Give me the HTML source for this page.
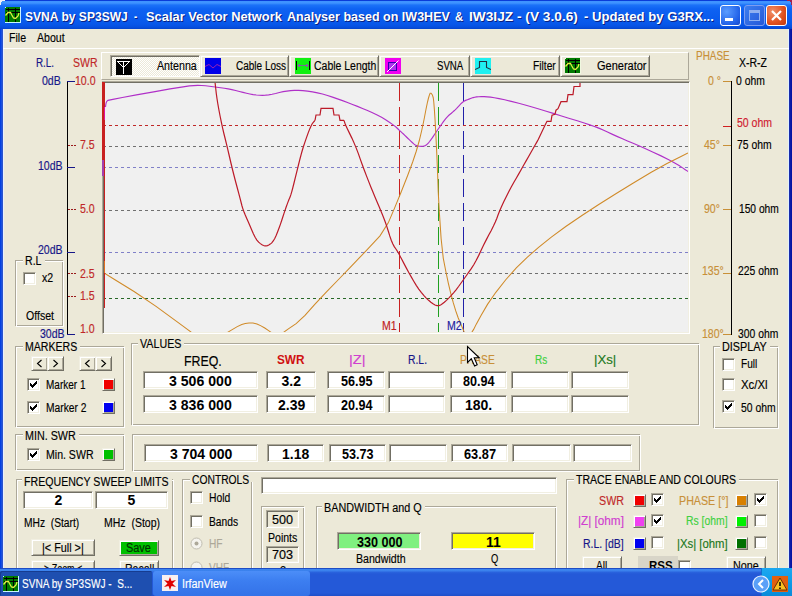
<!DOCTYPE html><html><head><meta charset="utf-8"><style>
html,body{margin:0;padding:0;width:792px;height:596px;overflow:hidden;background:#ECE9D8;position:relative;font-family:"Liberation Sans",sans-serif}
div,span,svg{position:absolute;box-sizing:border-box}span{white-space:pre;-webkit-text-stroke:0.15px currentColor}
</style></head><body>
<div style="left:0px;top:0px;width:792px;height:596px;background:#0A55E0"></div>
<div style="left:0px;top:0px;width:792px;height:29px;background:linear-gradient(#0A3CD8 0px,#0A3CD8 1px,#3E92FF 1px,#4094FF 3px,#1C72F8 5px,#0E62F2 9px,#0A5CEE 18px,#0858EA 24px,#0650E0 27px,#0444CC 29px)"></div>
<svg style="left:0;top:0" width="5" height="5"><path d="M0 0H5V1H2V2H1V5H0Z" fill="#F0F0F8"/></svg>
<svg style="left:787px;top:0" width="5" height="5"><path d="M0 0H5V5H4V2H3V1H0Z" fill="#A02050"/></svg>
<div style="left:0px;top:29px;width:3px;height:539px;background:linear-gradient(90deg,#0038D8 0,#0848E8 1px,#2858D8 2px,#3050C0 3px)"></div>
<div style="left:789px;top:29px;width:3px;height:539px;background:linear-gradient(90deg,#2038B0 0,#1020A8 1px,#0010A0 3px)"></div>
<div style="left:3px;top:29px;width:786px;height:539px;background:#ECE9D8"></div>
<div style="left:3px;top:29px;width:1px;height:539px;background:#E8F0FF"></div>
<div style="left:788px;top:29px;width:1px;height:539px;background:#E0F0FF"></div>
<svg style="left:5px;top:7px" width="16" height="16"><rect x="0" y="0" width="16" height="16" fill="#C8F4FF"/><rect x="1" y="1" width="14" height="14" fill="#007A00"/><rect x="0" y="1" width="1" height="14" fill="#007A00"/><rect x="1" y="0" width="14" height="1" fill="#007A00"/><path d="M1 2.5h14M1 5.5h14M3.5 1v14M10.5 1v14" stroke="#000" stroke-width="1"/><polyline points="0.5,8.5 3,5.5 5.5,5.5 6.5,7.5 8.5,11 10.5,11.5 13,9 14,6" fill="none" stroke="#E0F040" stroke-width="1.3"/></svg>
<span style="left:26.0px;top:11px;font-size:13px;line-height:13px;font-weight:bold;-webkit-text-stroke:0;color:#0A2080;transform:scaleX(0.9279);transform-origin:0px 0;">SVNA by SP3SWJ</span>
<span style="left:135.0px;top:11px;font-size:13px;line-height:13px;font-weight:bold;-webkit-text-stroke:0;color:#0A2080;transform:scaleX(0.7500);transform-origin:0px 0;">-</span>
<span style="left:147.0px;top:11px;font-size:13px;line-height:13px;font-weight:bold;-webkit-text-stroke:0;color:#0A2080;transform:scaleX(0.9899);transform-origin:0px 0;">Scalar Vector Network</span>
<span style="left:288.0px;top:11px;font-size:13px;line-height:13px;font-weight:bold;-webkit-text-stroke:0;color:#0A2080;transform:scaleX(0.9633);transform-origin:0px 0;">Analyser based on IW3HEV</span>
<span style="left:456.2px;top:11px;font-size:13px;line-height:13px;font-weight:bold;-webkit-text-stroke:0;color:#0A2080;transform:scaleX(0.8667);transform-origin:0px 0;">&amp;</span>
<span style="left:470.3px;top:11px;font-size:13px;line-height:13px;font-weight:bold;-webkit-text-stroke:0;color:#0A2080;transform:scaleX(1.0544);transform-origin:0px 0;">IW3IJZ - (V 3.0.6)</span>
<span style="left:585.0px;top:11px;font-size:13px;line-height:13px;font-weight:bold;-webkit-text-stroke:0;color:#0A2080;transform:scaleX(1.0101);transform-origin:0px 0;">- Updated by G3RX...</span>
<span style="left:25.0px;top:10px;font-size:13px;line-height:13px;font-weight:bold;-webkit-text-stroke:0;color:#fff;transform:scaleX(0.9279);transform-origin:0px 0;">SVNA by SP3SWJ</span>
<span style="left:134.0px;top:10px;font-size:13px;line-height:13px;font-weight:bold;-webkit-text-stroke:0;color:#fff;transform:scaleX(0.7500);transform-origin:0px 0;">-</span>
<span style="left:146.0px;top:10px;font-size:13px;line-height:13px;font-weight:bold;-webkit-text-stroke:0;color:#fff;transform:scaleX(0.9899);transform-origin:0px 0;">Scalar Vector Network</span>
<span style="left:287.0px;top:10px;font-size:13px;line-height:13px;font-weight:bold;-webkit-text-stroke:0;color:#fff;transform:scaleX(0.9633);transform-origin:0px 0;">Analyser based on IW3HEV</span>
<span style="left:455.2px;top:10px;font-size:13px;line-height:13px;font-weight:bold;-webkit-text-stroke:0;color:#fff;transform:scaleX(0.8667);transform-origin:0px 0;">&amp;</span>
<span style="left:469.3px;top:10px;font-size:13px;line-height:13px;font-weight:bold;-webkit-text-stroke:0;color:#fff;transform:scaleX(1.0544);transform-origin:0px 0;">IW3IJZ - (V 3.0.6)</span>
<span style="left:584.0px;top:10px;font-size:13px;line-height:13px;font-weight:bold;-webkit-text-stroke:0;color:#fff;transform:scaleX(1.0101);transform-origin:0px 0;">- Updated by G3RX...</span>
<div style="left:720px;top:5px;width:21px;height:21px;border:1px solid #fff;border-radius:3px;background:radial-gradient(circle at 30% 30%,#5A9CFF,#2060E8 70%,#1848C8)"><div style="left:4px;top:12px;width:8px;height:3px;background:#fff"></div></div>
<div style="left:744px;top:5px;width:21px;height:21px;border:1px solid #7C9CF0;border-radius:3px;background:linear-gradient(135deg,#3C7EF0,#2458D8)"><div style="left:4px;top:4px;width:11px;height:11px;border:1px solid #8FB0F0;border-top-width:3px"></div></div>
<div style="left:766px;top:5px;width:21px;height:21px;border:1px solid #fff;border-radius:3px;background:radial-gradient(circle at 30% 30%,#F0906A,#E0501E 60%,#C03A10)"><svg width="19" height="19" style="left:0;top:0"><path d="M5 5L14 14M14 5L5 14" stroke="#fff" stroke-width="2.2"/></svg></div>
<span style="left:9.0px;top:32px;font-size:12px;line-height:12px;color:#000;transform:scaleX(0.8800);transform-origin:0px 0;">File</span>
<span style="left:37.0px;top:32px;font-size:12px;line-height:12px;color:#000;transform:scaleX(0.8800);transform-origin:0px 0;">About</span>
<div style="left:3px;top:48px;width:786px;height:1px;background:#fff"></div>
<span style="left:36.0px;top:57px;font-size:12px;line-height:12px;color:#161688;transform:scaleX(0.8182);transform-origin:0px 0;">R.L.</span>
<span style="left:73.0px;top:57px;font-size:12px;line-height:12px;color:#C02828;transform:scaleX(0.8750);transform-origin:0px 0;">SWR</span>
<div style="left:67px;top:81px;width:1px;height:254px;background:#000"></div>
<div style="left:67px;top:81px;width:8px;height:1px;background:#161688"></div>
<div style="left:67px;top:167px;width:8px;height:1px;background:#161688"></div>
<div style="left:67px;top:252px;width:8px;height:1px;background:#161688"></div>
<div style="left:67px;top:334px;width:8px;height:1px;background:#161688"></div>
<div style="left:68px;top:145px;width:8px;height:1px;background:repeating-linear-gradient(90deg,#9A1C1C 0 2px,transparent 2px 3px)"></div>
<div style="left:68px;top:209px;width:8px;height:1px;background:repeating-linear-gradient(90deg,#9A1C1C 0 2px,transparent 2px 3px)"></div>
<div style="left:68px;top:273px;width:8px;height:1px;background:repeating-linear-gradient(90deg,#9A1C1C 0 2px,transparent 2px 3px)"></div>
<div style="left:68px;top:296px;width:8px;height:1px;background:repeating-linear-gradient(90deg,#9A1C1C 0 2px,transparent 2px 3px)"></div>
<span style="left:42.0px;top:75px;font-size:12px;line-height:12px;color:#161688;transform:scaleX(0.8800);transform-origin:0px 0;">0dB</span>
<span style="left:38.0px;top:160px;font-size:12px;line-height:12px;color:#161688;transform:scaleX(0.8800);transform-origin:0px 0;">10dB</span>
<span style="left:38.0px;top:244px;font-size:12px;line-height:12px;color:#161688;transform:scaleX(0.8800);transform-origin:0px 0;">20dB</span>
<span style="left:40.0px;top:328px;font-size:12px;line-height:12px;color:#161688;transform:scaleX(0.8800);transform-origin:0px 0;">30dB</span>
<span style="left:75.0px;top:75px;font-size:12px;line-height:12px;color:#C02828;transform:scaleX(0.8800);transform-origin:0px 0;">10.0</span>
<span style="left:80.0px;top:139px;font-size:12px;line-height:12px;color:#C02828;transform:scaleX(0.8800);transform-origin:0px 0;">7.5</span>
<span style="left:80.0px;top:203px;font-size:12px;line-height:12px;color:#C02828;transform:scaleX(0.8800);transform-origin:0px 0;">5.0</span>
<span style="left:80.0px;top:268px;font-size:12px;line-height:12px;color:#C02828;transform:scaleX(0.8800);transform-origin:0px 0;">2.5</span>
<span style="left:80.0px;top:290px;font-size:12px;line-height:12px;color:#C02828;transform:scaleX(0.8800);transform-origin:0px 0;">1.5</span>
<span style="left:80.0px;top:323px;font-size:12px;line-height:12px;color:#C02828;transform:scaleX(0.8800);transform-origin:0px 0;">1.0</span>
<div style="left:15px;top:260px;width:48px;height:66px;border:1px solid #ACA899"></div>
<div style="left:16px;top:261px;width:48px;height:66px;border:1px solid #FFFFFF"></div>
<div style="left:23px;top:259px;width:21.72px;height:4px;background:#ECE9D8"></div>
<span style="left:25.0px;top:255px;font-size:12px;line-height:12px;color:#000;transform:scaleX(0.8800);transform-origin:0px 0;">R.L</span>
<div style="left:23px;top:272px;width:13px;height:13px;background:#fff;border:1px solid;border-color:#ACA899 #FFFFFF #FFFFFF #ACA899;box-shadow:inset 1px 1px #716F64,inset -1px -1px #F1EFE2"></div>
<span style="left:42.0px;top:272px;font-size:12px;line-height:12px;color:#000;transform:scaleX(0.8800);transform-origin:0px 0;">x2</span>
<span style="left:26.0px;top:310px;font-size:12px;line-height:12px;color:#000;transform:scaleX(0.8800);transform-origin:0px 0;">Offset</span>
<div style="left:101px;top:52px;width:588px;height:28px;border:1px solid;border-color:#FFFFFF #ACA899 #ACA899 #FFFFFF"></div>
<div style="left:110px;top:55px;width:90px;height:22px;background:repeating-conic-gradient(#fff 0 25%,#ECE9D8 0 50%) 0 0/2px 2px;border:1px solid;border-color:#ACA899 #FFFFFF #FFFFFF #ACA899;box-shadow:inset 1px 1px #716F64"></div>
<svg style="left:116px;top:59px" width="16" height="16" shape-rendering="crispEdges"><rect width="16" height="16" fill="#000"/><path d="M1 2h13v1H1zM7 2h1v13H7zM1 2h1v1h-1zM13 2h1v1h-1zM2 3h1v1h-1zM12 3h1v1h-1zM3 4h1v1h-1zM11 4h1v1h-1zM4 5h1v1h-1zM10 5h1v1h-1zM5 6h1v1h-1zM9 6h1v1h-1zM6 7h1v1h-1zM8 7h1v1h-1zM7 8h1v1h-1zM7 8h1v1h-1z" fill="#fff"/></svg>
<span style="left:157.0px;top:60px;font-size:12px;line-height:12px;color:#000;transform:scaleX(0.8889);transform-origin:0px 0;">Antenna</span>
<div style="left:200px;top:55px;width:89px;height:22px;background:#ECE9D8;border:1px solid;border-color:#F1EFE2 #716F64 #716F64 #F1EFE2;box-shadow:inset 1px 1px #FFFFFF,inset -1px -1px #ACA899;"></div>
<svg style="left:205px;top:58px" width="16" height="16"><rect width="16" height="16" fill="#0000E8"/><polyline points="0,8.5 4,6.5 8,10 12,6.5 16,8.5" fill="none" stroke="#9A20B0" stroke-width="1"/></svg>
<span style="left:236.0px;top:60px;font-size:12px;line-height:12px;color:#000;transform:scaleX(0.8333);transform-origin:0px 0;">Cable Loss</span>
<div style="left:289px;top:55px;width:90px;height:22px;background:#ECE9D8;border:1px solid;border-color:#F1EFE2 #716F64 #716F64 #F1EFE2;box-shadow:inset 1px 1px #FFFFFF,inset -1px -1px #ACA899;"></div>
<svg style="left:295px;top:58px" width="16" height="16"><rect width="16" height="16" fill="#10F010"/><path d="M1.5 3v9M14.5 3v9" stroke="#000" stroke-width="1"/><path d="M3 7.5h10" stroke="#707090" stroke-width="1"/><circle cx="4" cy="7.5" r="1.3" fill="#A040C0"/><circle cx="12" cy="7.5" r="1.3" fill="#A040C0"/></svg>
<span style="left:314.0px;top:60px;font-size:12px;line-height:12px;color:#000;transform:scaleX(0.8732);transform-origin:0px 0;">Cable Length</span>
<div style="left:379px;top:55px;width:91px;height:22px;background:#ECE9D8;border:1px solid;border-color:#F1EFE2 #716F64 #716F64 #F1EFE2;box-shadow:inset 1px 1px #FFFFFF,inset -1px -1px #ACA899;"></div>
<svg style="left:385px;top:58px" width="16" height="16"><rect width="16" height="16" fill="#F000F0"/><rect x="3.5" y="4.5" width="8" height="8" fill="#B030F0" stroke="#3000B0"/><path d="M2 14L13.5 2.5" stroke="#fff" stroke-width="1"/></svg>
<span style="left:437.0px;top:60px;font-size:12px;line-height:12px;color:#000;transform:scaleX(0.8030);transform-origin:0px 0;">SVNA</span>
<div style="left:470px;top:55px;width:90px;height:22px;background:#ECE9D8;border:1px solid;border-color:#F1EFE2 #716F64 #716F64 #F1EFE2;box-shadow:inset 1px 1px #FFFFFF,inset -1px -1px #ACA899;"></div>
<svg style="left:475px;top:58px" width="16" height="16"><rect width="16" height="16" fill="#20F0F0"/><polyline points="0,11.5 4.5,9.5 4.5,3.5 11.5,3.5 11.5,9.5 16,11.5" fill="none" stroke="#203040" stroke-width="1.1"/></svg>
<span style="left:533.0px;top:60px;font-size:12px;line-height:12px;color:#000;transform:scaleX(0.8519);transform-origin:0px 0;">Filter</span>
<div style="left:560px;top:55px;width:90px;height:22px;background:#ECE9D8;border:1px solid;border-color:#F1EFE2 #716F64 #716F64 #F1EFE2;box-shadow:inset 1px 1px #FFFFFF,inset -1px -1px #ACA899;"></div>
<svg style="left:565px;top:58px" width="16" height="16"><rect x="0" y="0" width="16" height="16" fill="#F0F8E0"/><rect x="1" y="1" width="14" height="14" fill="#007A00"/><rect x="0" y="1" width="1" height="14" fill="#007A00"/><rect x="1" y="0" width="14" height="1" fill="#007A00"/><path d="M1 2.5h14M1 5.5h14M3.5 1v14M10.5 1v14" stroke="#000" stroke-width="1"/><polyline points="0.5,8.5 3,5.5 5.5,5.5 6.5,7.5 8.5,11 10.5,11.5 13,9 14,6" fill="none" stroke="#E0F040" stroke-width="1.3"/></svg>
<span style="left:597.0px;top:60px;font-size:12px;line-height:12px;color:#000;transform:scaleX(0.9167);transform-origin:0px 0;">Generator</span>
<div style="left:102px;top:81px;width:588px;height:253px;background:#F0F0F0;border:1px solid;border-color:#ACA899 #FFFFFF #FFFFFF #ACA899;box-shadow:inset 1px 1px #716F64,inset -1px -1px #F1EFE2;"></div>
<svg style="left:104px;top:83px" width="584" height="249"><g transform="translate(-104,-83)"><path d="M105 125.5H688" stroke="#C02828" stroke-dasharray="3 3" stroke-dashoffset="2"/><path d="M105 146.5H688" stroke="#707070" stroke-dasharray="3 3" stroke-dashoffset="2"/><path d="M105 167.5H688" stroke="#8080C8" stroke-dasharray="3 3" stroke-dashoffset="2"/><path d="M105 210.5H688" stroke="#707070" stroke-dasharray="3 3" stroke-dashoffset="2"/><path d="M105 252.5H688" stroke="#8080C8" stroke-dasharray="3 3" stroke-dashoffset="2"/><path d="M105 273.5H688" stroke="#707070" stroke-dasharray="3 3" stroke-dashoffset="2"/><path d="M105 298.5H688" stroke="#286828" stroke-dasharray="3 3" stroke-dashoffset="2"/><path d="M399.5 83V332" stroke="#C82020" stroke-dasharray="18 6"/><path d="M438.5 83V332" stroke="#20A020" stroke-dasharray="18 6"/><path d="M463.5 83V332" stroke="#2020A8" stroke-dasharray="18 6"/><polyline points="105.5,107 105.53125,106.75 105.59375,106.25 105.6875,105.5 105.8125,104.5 105.96875,103.625 106.15625,102.875 106.375,102.25 106.625,101.75 106.90625,101.3125 107.21875,100.9375 107.5625,100.625 107.9375,100.375 112.875,99.34375 122.375,97.53125 136.4375,94.9375 155.0625,91.5625 170.09375,88.9375 181.53125,87.0625 189.375,85.9375 193.625,85.5625 197.75,85.40625 201.75,85.46875 205.625,85.75 209.375,86.25 213.125,86.75 216.875,87.25 220.625,87.75 224.375,88.25 228.125,88.875 231.875,89.625 235.625,90.5 239.375,91.5 243.0,92.40625 246.5,93.21875 249.875,93.9375 253.125,94.5625 256.3125,95.0 259.4375,95.25 262.5,95.3125 265.5,95.1875 268.6875,94.84375 272.0625,94.28125 275.625,93.5 279.375,92.5 283.125,91.6875 286.875,91.0625 290.625,90.625 294.375,90.375 298.4375,90.375 302.8125,90.625 307.5,91.125 312.5,91.875 317.5,92.85 322.5,94.05000000000001 327.5,95.47500000000001 332.5,97.125 337.5,98.84374999999999 342.5,100.63125 347.5,102.4875 352.5,104.4125 357.5,106.4 362.5,108.44999999999999 367.5,110.56249999999999 372.5,112.73750000000001 377.1875,114.99375 381.5625,117.33125 385.625,119.75 389.375,122.25 392.4375,124.375 394.8125,126.125 396.5,127.5 397.5,128.5 398.5625,129.53125 399.6875,130.59375 400.875,131.6875 402.125,132.8125 403.4375,134.03125 404.8125,135.34375 406.25,136.75 407.75,138.25 409.25,139.7125 410.75,141.1375 412.25,142.52499999999998 413.75,143.875 415.25,144.925 416.75,145.675 418.25,146.125 419.75,146.27499999999998 421.125,146.325 422.375,146.275 423.5,146.125 424.5,145.875 425.5,145.41875 426.5,144.75625000000002 427.5,143.8875 428.5,142.8125 429.59375,141.49374999999998 430.78125,139.93124999999998 432.0625,138.125 433.4375,136.075 434.8125,134.03750000000002 436.1875,132.0125 437.5625,130.0 438.9375,128.0 440.34375,125.9875 441.78125,123.9625 443.25,121.92500000000001 444.75,119.87499999999999 446.1875,118.08749999999999 447.5625,116.5625 448.875,115.3 450.125,114.3 451.375,113.25625 452.625,112.16875 453.875,111.0375 455.125,109.8625 456.4375,108.5625 457.8125,107.13749999999999 459.25,105.5875 460.75,103.9125 462.3125,102.48750000000001 463.9375,101.3125 465.625,100.3875 467.375,99.7125 469.0,99.09375 470.5,98.53125 471.875,98.025 473.125,97.575 474.6875,97.20625000000001 476.5625,96.91875000000002 478.75,96.7125 481.25,96.5875 484.0625,96.62500000000001 487.1875,96.82500000000002 490.625,97.1875 494.375,97.71249999999999 499.0625,98.58749999999999 504.6875,99.8125 511.25,101.38749999999999 518.75,103.31250000000001 526.0,105.25625000000001 533.0,107.21875 539.75,109.2 546.25,111.2 553.25,113.36250000000001 560.75,115.6875 568.75,118.175 577.25,120.825 584.25,123.04374999999999 589.75,124.83124999999998 593.75,126.18749999999999 596.25,127.11250000000001 599.375,128.39375 603.125,130.03125 607.5,132.02499999999998 612.5,134.375 617.5,136.64375 622.5,138.83125 627.5,140.9375 632.5,142.96249999999998 638.35625,145.46875 645.0687499999999,148.45624999999998 652.6375,151.925 661.0625,155.875 668.2750000000001,159.44375000000002 674.2750000000001,162.63125000000002 679.0625,165.4375 682.6374999999999,167.8625 685.3187499999999,169.68124999999998 687.10625,170.89375 688,171.5" fill="none" stroke="#B030C8" stroke-width="1.15"/><polyline points="104,273 114.15,279.25 134.45,291.75 156.04999999999998,306.375 178.95000000000002,323.125 190.8,331.875 191.6,332.625 192,333" fill="none" stroke="#D08A28" stroke-width="1.05"/><polyline points="225,334 226.0,333.375 228.0,332.125 231.75,329.875 237.25,326.625 241.75,324.5 245.25,323.5 249.0,323.0 253.0,323.0 257.0,323.95 261.0,325.85 264.75,327.975 268.25,330.325 270.75,332.125 272.25,333.375 273,334" fill="none" stroke="#D08A28" stroke-width="1.05"/><polyline points="282,334 282.625,333.375 283.875,332.125 288.375,328.875 296.125,323.625 305.0,315.4 315.0,304.20000000000005 326.25,292.15000000000003 338.75,279.25 350.0,267.6 360.0,257.2 370.0,246.625 380.0,235.875 388.25,222.875 394.75,207.625 401.25,191.75 407.75,175.25 412.75,161.75 416.25,151.25 419.25,140.75 421.75,130.25 424.0,119.75 426.0,109.25 427.5,102.0 428.5,98.0 429.375,95.1 430.125,93.30000000000001 431.125,93.22500000000001 432.375,94.875 433.25,97.72500000000001 433.75,101.77499999999999 434.35,109.1 435.04999999999995,119.7 435.9,135.5 436.9,156.5 437.67499999999995,175.25 438.225,191.75 439.375,212.9 441.125,238.7 443.25,258.075 445.75,271.025 448.25,282.775 450.75,293.32500000000005 453.25,302.70000000000005 455.75,310.9 458.25,317.95 460.75,323.85 462.75,328.6 464.25,332.2 465,334" fill="none" stroke="#D08A28" stroke-width="1.05"/><polyline points="470,334 470.575,333.5 471.725,332.5 473.625,329.375 476.27500000000003,324.125 480.90000000000003,315.8 487.5,304.4 495.85,292.29999999999995 505.95,279.5 516.3,267.925 526.9000000000001,257.57500000000005 538.575,247.3 551.325,237.1 565.7750000000001,226.5 581.925,215.5 598.75,204.5 616.25,193.5 633.75,182.75 651.25,172.25 667.0,163.5 681.0,156.5 688,153" fill="none" stroke="#D08A28" stroke-width="1.05"/><polyline points="215,82 215.125,83.125 215.375,85.375 215.75,88.75 216.25,93.25 216.9375,98.25 217.8125,103.75 218.875,109.75 220.125,116.25 221.375,122.375 222.625,128.125 223.875,133.5 225.125,138.5 226.4375,143.875 227.8125,149.625 229.25,155.75 230.75,162.25 232.3125,168.75 233.9375,175.25 235.625,181.75 237.375,188.25 238.875,193.875 240.125,198.625 241.125,202.5 241.875,205.5 242.8125,208.59375 243.9375,211.78125 245.25,215.0625 246.75,218.4375 248.3125,222.0 249.9375,225.75 251.625,229.6875 253.375,233.8125 255.125,237.26875 256.875,240.05624999999998 258.625,242.17499999999998 260.375,243.625 262.0,244.72500000000002 263.5,245.47500000000002 264.875,245.875 266.125,245.92499999999998 267.4375,245.64999999999998 268.8125,245.05 270.25,244.125 271.75,242.875 273.25,240.9875 274.75,238.46249999999998 276.25,235.29999999999998 277.75,231.5 279.15625,227.76875 280.46875,224.10625000000002 281.6875,220.5125 282.8125,216.9875 283.91875,213.61249999999998 285.00625,210.3875 286.07500000000005,207.3125 287.125,204.38750000000002 288.05625,201.88125000000002 288.86875,199.79375 289.5625,198.125 290.13750000000005,196.875 290.88125,194.6875 291.79375,191.5625 292.875,187.5 294.125,182.5 295.3125,177.725 296.4375,173.175 297.5,168.85000000000002 298.5,164.75 299.46875,160.8875 300.40625,157.2625 301.3125,153.875 302.1875,150.72500000000002 303.3125,147.05 304.6875,142.85 306.3125,138.125 308.1875,132.875 309.84375,128.65 311.28125,125.44999999999999 312.5,123.27499999999999 313.5,122.125 314.25,121.26250000000002 314.75,120.68750000000001 315,120.4" fill="none" stroke="#BC1A28" stroke-width="1.2"/><polyline points="315,120.4 316,115 320,115 321,108.4 333,108.4 334,115 339,115 340,120.4 344,120.4" fill="none" stroke="#BC1A28" stroke-width="1.2"/><polyline points="344,120.4 344.09375,120.68750000000001 344.28125,121.26250000000002 344.5625,122.125 344.9375,123.27499999999999 345.85625,125.44999999999999 347.31875,128.65 349.32500000000005,132.875 351.87499999999994,138.125 354.24375,143.375 356.43125,148.625 358.43749999999994,153.875 360.26250000000005,159.125 362.19375,164.5 364.23125,170.0 366.375,175.625 368.625,181.375 370.84375,186.9375 373.03125,192.3125 375.1875,197.5 377.3125,202.5 379.25,207.09375 381.0,211.28125 382.5625,215.0625 383.9375,218.4375 385.34375,222.2125 386.78125,226.3875 388.25,230.96249999999998 389.75,235.93750000000003 391.25,240.20625 392.75,243.76875 394.25,246.62500000000003 395.75,248.77499999999998 397.0,250.6375 398.0,252.2125 398.75,253.5 399.25,254.5 400.25,256.4375 401.75,259.3125 403.75,263.125 406.25,267.875 408.75,272.46875 411.25,276.90625 413.75,281.1875 416.25,285.3125 418.75,289.0625 421.25,292.4375 423.75,295.4375 426.25,298.0625 428.625,300.33125 430.875,302.24375 433.0,303.79999999999995 435.0,305.0 436.9375,305.6 438.8125,305.6 440.625,305.0 442.375,303.79999999999995 444.3125,302.24375 446.4375,300.33125 448.75,298.0625 451.25,295.4375 453.75,292.59375 456.25,289.53125 458.75,286.25 461.25,282.75 463.75,279.24375 466.25,275.73125000000005 468.75,272.2125 471.25,268.6875 473.75,264.70624999999995 476.25,260.26874999999995 478.75,255.37499999999997 481.25,250.02499999999998 483.75,244.85625 486.25,239.86875 488.75,235.0625 491.25,230.4375 493.4375,226.0875 495.3125,222.0125 496.875,218.21249999999998 498.125,214.68750000000003 499.6875,210.76875 501.5625,206.45625 503.75,201.75000000000003 506.25,196.64999999999998 508.75,191.74374999999998 511.25,187.03125000000003 513.75,182.51250000000002 516.25,178.1875 518.75,173.83749999999998 521.25,169.46249999999998 523.75,165.0625 526.25,160.6375 528.625,156.44375000000002 530.875,152.48125 533.0,148.75 535.0,145.25 536.5,142.625 537.5,140.875 538,140" fill="none" stroke="#BC1A28" stroke-width="1.2"/><polyline points="538,140 545,125.3 547,121.3 551,121.3 552,115.2 555,114.2 556,110.2 558,108.7 561,101.7 567,101.7 568,94.6 573,94.6 574,86.5 580,86.5 580,82" fill="none" stroke="#BC1A28" stroke-width="1.2"/></g></svg>
<div style="left:102px;top:82px;width:3px;height:78px;background:#C82020"></div>
<div style="left:102px;top:160px;width:2px;height:16px;background:#A040B0"></div>
<div style="left:104px;top:107px;width:1px;height:13px;background:#E010A0"></div>
<div style="left:104px;top:160px;width:1px;height:148px;background:#C82020"></div>
<div style="left:104px;top:261px;width:1px;height:12px;background:#E07020"></div>
<span style="left:382.0px;top:320px;font-size:12px;line-height:12px;color:#C02020;transform:scaleX(0.8800);transform-origin:0px 0;">M1</span>
<span style="left:447.0px;top:320px;font-size:12px;line-height:12px;color:#2020A0;transform:scaleX(0.8800);transform-origin:0px 0;">M2</span>
<span style="left:696.0px;top:50px;font-size:12px;line-height:12px;color:#C89038;transform:scaleX(0.8293);transform-origin:0px 0;">PHASE</span>
<span style="left:739.0px;top:57px;font-size:12px;line-height:12px;color:#000;transform:scaleX(0.8750);transform-origin:0px 0;">X-R-Z</span>
<div style="left:731px;top:81px;width:1px;height:254px;background:#000"></div>
<div style="left:723px;top:81px;width:8px;height:1px;background:#C89038"></div>
<div style="left:723px;top:145px;width:8px;height:1px;background:#C89038"></div>
<div style="left:723px;top:209px;width:8px;height:1px;background:#C89038"></div>
<div style="left:723px;top:273px;width:8px;height:1px;background:#C89038"></div>
<div style="left:723px;top:334px;width:8px;height:1px;background:#C89038"></div>
<div style="left:723px;top:126px;width:8px;height:1px;background:#D02020"></div>
<span style="left:708.0px;top:75px;font-size:12px;line-height:12px;color:#C89038;transform:scaleX(0.8800);transform-origin:0px 0;">0 °</span>
<span style="left:704.0px;top:139px;font-size:12px;line-height:12px;color:#C89038;transform:scaleX(0.8800);transform-origin:0px 0;">45°</span>
<span style="left:704.0px;top:203px;font-size:12px;line-height:12px;color:#C89038;transform:scaleX(0.8800);transform-origin:0px 0;">90°</span>
<span style="left:702.0px;top:265px;font-size:12px;line-height:12px;color:#C89038;transform:scaleX(0.8800);transform-origin:0px 0;">135°</span>
<span style="left:702.0px;top:328px;font-size:12px;line-height:12px;color:#C89038;transform:scaleX(0.8800);transform-origin:0px 0;">180°</span>
<span style="left:736.0px;top:75px;font-size:12px;line-height:12px;color:#000;transform:scaleX(0.8636);transform-origin:0px 0;">0 ohm</span>
<span style="left:737.0px;top:117px;font-size:12px;line-height:12px;color:#D02030;transform:scaleX(0.8750);transform-origin:0px 0;">50 ohm</span>
<span style="left:737.0px;top:139px;font-size:12px;line-height:12px;color:#000;transform:scaleX(0.8625);transform-origin:0px 0;">75 ohm</span>
<span style="left:739.0px;top:203px;font-size:12px;line-height:12px;color:#000;transform:scaleX(0.8511);transform-origin:0px 0;">150 ohm</span>
<span style="left:738.0px;top:265px;font-size:12px;line-height:12px;color:#000;transform:scaleX(0.8617);transform-origin:0px 0;">225 ohm</span>
<span style="left:738.0px;top:328px;font-size:12px;line-height:12px;color:#000;transform:scaleX(0.8617);transform-origin:0px 0;">300 ohm</span>
<div style="left:15px;top:346px;width:109px;height:81px;border:1px solid #ACA899"></div>
<div style="left:16px;top:347px;width:109px;height:81px;border:1px solid #FFFFFF"></div>
<div style="left:23px;top:345px;width:57px;height:4px;background:#ECE9D8"></div>
<span style="left:25.0px;top:341px;font-size:12px;line-height:12px;color:#000;transform:scaleX(0.8814);transform-origin:0px 0;">MARKERS</span>
<div style="left:31px;top:356px;width:17px;height:15px;background:#ECE9D8;border:1px solid;border-color:#F1EFE2 #716F64 #716F64 #F1EFE2;box-shadow:inset 1px 1px #FFFFFF,inset -1px -1px #ACA899;"></div>
<div style="left:47px;top:356px;width:17px;height:15px;background:#ECE9D8;border:1px solid;border-color:#F1EFE2 #716F64 #716F64 #F1EFE2;box-shadow:inset 1px 1px #FFFFFF,inset -1px -1px #ACA899;"></div>
<svg style="left:31px;top:356px" width="33" height="15"><path d="M10.5 4L6.5 7.5L10.5 11M22.5 4L26.5 7.5L22.5 11" stroke="#000" stroke-width="1.1" fill="none"/></svg>
<div style="left:79px;top:356px;width:17px;height:15px;background:#ECE9D8;border:1px solid;border-color:#F1EFE2 #716F64 #716F64 #F1EFE2;box-shadow:inset 1px 1px #FFFFFF,inset -1px -1px #ACA899;"></div>
<div style="left:95px;top:356px;width:17px;height:15px;background:#ECE9D8;border:1px solid;border-color:#F1EFE2 #716F64 #716F64 #F1EFE2;box-shadow:inset 1px 1px #FFFFFF,inset -1px -1px #ACA899;"></div>
<svg style="left:79px;top:356px" width="33" height="15"><path d="M10.5 4L6.5 7.5L10.5 11M22.5 4L26.5 7.5L22.5 11" stroke="#000" stroke-width="1.1" fill="none"/></svg>
<div style="left:27px;top:378px;width:13px;height:13px;background:#fff;border:1px solid;border-color:#ACA899 #FFFFFF #FFFFFF #ACA899;box-shadow:inset 1px 1px #716F64,inset -1px -1px #F1EFE2"><svg width="11" height="11" style="position:absolute;left:0;top:0" shape-rendering="crispEdges"><path d="M2 4h1v3h-1zM3 5h1v3h-1zM4 6h1v3h-1zM5 5h1v3h-1zM6 4h1v3h-1zM7 3h1v3h-1zM8 2h1v3h-1z" fill="#000"/></svg></div>
<span style="left:46.0px;top:379px;font-size:12px;line-height:12px;color:#000;transform:scaleX(0.8333);transform-origin:0px 0;">Marker 1</span>
<div style="left:102px;top:378px;width:13px;height:13px;background:#F00000;border:1px solid;border-color:#F1EFE2 #716F64 #716F64 #F1EFE2;box-shadow:inset 1px 1px #FFFFFF,inset -1px -1px #ACA899"></div>
<div style="left:27px;top:401px;width:13px;height:13px;background:#fff;border:1px solid;border-color:#ACA899 #FFFFFF #FFFFFF #ACA899;box-shadow:inset 1px 1px #716F64,inset -1px -1px #F1EFE2"><svg width="11" height="11" style="position:absolute;left:0;top:0" shape-rendering="crispEdges"><path d="M2 4h1v3h-1zM3 5h1v3h-1zM4 6h1v3h-1zM5 5h1v3h-1zM6 4h1v3h-1zM7 3h1v3h-1zM8 2h1v3h-1z" fill="#000"/></svg></div>
<span style="left:46.0px;top:402px;font-size:12px;line-height:12px;color:#000;transform:scaleX(0.8542);transform-origin:0px 0;">Marker 2</span>
<div style="left:102px;top:401px;width:13px;height:13px;background:#0000F0;border:1px solid;border-color:#F1EFE2 #716F64 #716F64 #F1EFE2;box-shadow:inset 1px 1px #FFFFFF,inset -1px -1px #ACA899"></div>
<div style="left:15px;top:434px;width:109px;height:36px;border:1px solid #ACA899"></div>
<div style="left:16px;top:435px;width:109px;height:36px;border:1px solid #FFFFFF"></div>
<div style="left:23px;top:433px;width:56px;height:4px;background:#ECE9D8"></div>
<span style="left:25.0px;top:430px;font-size:12px;line-height:12px;color:#000;transform:scaleX(0.8947);transform-origin:0px 0;">MIN. SWR</span>
<div style="left:27px;top:448px;width:13px;height:13px;background:#fff;border:1px solid;border-color:#ACA899 #FFFFFF #FFFFFF #ACA899;box-shadow:inset 1px 1px #716F64,inset -1px -1px #F1EFE2"><svg width="11" height="11" style="position:absolute;left:0;top:0" shape-rendering="crispEdges"><path d="M2 4h1v3h-1zM3 5h1v3h-1zM4 6h1v3h-1zM5 5h1v3h-1zM6 4h1v3h-1zM7 3h1v3h-1zM8 2h1v3h-1z" fill="#000"/></svg></div>
<span style="left:46.0px;top:449px;font-size:12px;line-height:12px;color:#000;transform:scaleX(0.8796);transform-origin:0px 0;">Min. SWR</span>
<div style="left:102px;top:448px;width:13px;height:13px;background:#00C000;border:1px solid;border-color:#F1EFE2 #716F64 #716F64 #F1EFE2;box-shadow:inset 1px 1px #FFFFFF,inset -1px -1px #ACA899"></div>
<div style="left:131px;top:343px;width:568px;height:82px;border:1px solid #ACA899"></div>
<div style="left:132px;top:344px;width:568px;height:82px;border:1px solid #FFFFFF"></div>
<div style="left:138px;top:342px;width:46px;height:4px;background:#ECE9D8"></div>
<span style="left:140.0px;top:338px;font-size:12px;line-height:12px;color:#000;transform:scaleX(0.8913);transform-origin:0px 0;">VALUES</span>
<span style="left:184.0px;top:354px;font-size:14px;line-height:14px;color:#000;transform:scaleX(0.8837);transform-origin:0px 0;">FREQ.</span>
<span style="left:277.0px;top:354px;font-size:12px;line-height:12px;font-weight:bold;-webkit-text-stroke:0;color:#D01010;transform:scaleX(0.9821);transform-origin:0px 0;">SWR</span>
<span style="left:349.0px;top:354px;font-size:12px;line-height:12px;color:#D040D0;transform:scaleX(1.2143);transform-origin:0px 0;">|Z|</span>
<span style="left:408.0px;top:354px;font-size:12px;line-height:12px;color:#161688;transform:scaleX(0.8636);transform-origin:0px 0;">R.L.</span>
<span style="left:460.0px;top:354px;font-size:12px;line-height:12px;color:#C89038;transform:scaleX(0.8537);transform-origin:0px 0;">PHASE</span>
<span style="left:535.0px;top:354px;font-size:12px;line-height:12px;color:#40D040;transform:scaleX(0.8333);transform-origin:0px 0;">Rs</span>
<span style="left:594.0px;top:354px;font-size:12px;line-height:12px;color:#207820;transform:scaleX(1.1000);transform-origin:0px 0;">|Xs|</span>
<div style="left:143px;top:371px;width:115px;height:18px;background:#fff;border:1px solid;border-color:#ACA899 #FFFFFF #FFFFFF #ACA899;box-shadow:inset 1px 1px #716F64,inset -1px -1px #F1EFE2;"></div>
<div style="left:266px;top:371px;width:50px;height:18px;background:#fff;border:1px solid;border-color:#ACA899 #FFFFFF #FFFFFF #ACA899;box-shadow:inset 1px 1px #716F64,inset -1px -1px #F1EFE2;"></div>
<div style="left:327px;top:371px;width:58px;height:18px;background:#fff;border:1px solid;border-color:#ACA899 #FFFFFF #FFFFFF #ACA899;box-shadow:inset 1px 1px #716F64,inset -1px -1px #F1EFE2;"></div>
<div style="left:388px;top:371px;width:57px;height:18px;background:#fff;border:1px solid;border-color:#ACA899 #FFFFFF #FFFFFF #ACA899;box-shadow:inset 1px 1px #716F64,inset -1px -1px #F1EFE2;"></div>
<div style="left:450px;top:371px;width:57px;height:18px;background:#fff;border:1px solid;border-color:#ACA899 #FFFFFF #FFFFFF #ACA899;box-shadow:inset 1px 1px #716F64,inset -1px -1px #F1EFE2;"></div>
<div style="left:511px;top:371px;width:58px;height:18px;background:#fff;border:1px solid;border-color:#ACA899 #FFFFFF #FFFFFF #ACA899;box-shadow:inset 1px 1px #716F64,inset -1px -1px #F1EFE2;"></div>
<div style="left:571px;top:371px;width:58px;height:18px;background:#fff;border:1px solid;border-color:#ACA899 #FFFFFF #FFFFFF #ACA899;box-shadow:inset 1px 1px #716F64,inset -1px -1px #F1EFE2;"></div>
<div style="left:143px;top:395px;width:115px;height:18px;background:#fff;border:1px solid;border-color:#ACA899 #FFFFFF #FFFFFF #ACA899;box-shadow:inset 1px 1px #716F64,inset -1px -1px #F1EFE2;"></div>
<div style="left:266px;top:395px;width:50px;height:18px;background:#fff;border:1px solid;border-color:#ACA899 #FFFFFF #FFFFFF #ACA899;box-shadow:inset 1px 1px #716F64,inset -1px -1px #F1EFE2;"></div>
<div style="left:327px;top:395px;width:58px;height:18px;background:#fff;border:1px solid;border-color:#ACA899 #FFFFFF #FFFFFF #ACA899;box-shadow:inset 1px 1px #716F64,inset -1px -1px #F1EFE2;"></div>
<div style="left:388px;top:395px;width:57px;height:18px;background:#fff;border:1px solid;border-color:#ACA899 #FFFFFF #FFFFFF #ACA899;box-shadow:inset 1px 1px #716F64,inset -1px -1px #F1EFE2;"></div>
<div style="left:450px;top:395px;width:57px;height:18px;background:#fff;border:1px solid;border-color:#ACA899 #FFFFFF #FFFFFF #ACA899;box-shadow:inset 1px 1px #716F64,inset -1px -1px #F1EFE2;"></div>
<div style="left:511px;top:395px;width:58px;height:18px;background:#fff;border:1px solid;border-color:#ACA899 #FFFFFF #FFFFFF #ACA899;box-shadow:inset 1px 1px #716F64,inset -1px -1px #F1EFE2;"></div>
<div style="left:571px;top:395px;width:58px;height:18px;background:#fff;border:1px solid;border-color:#ACA899 #FFFFFF #FFFFFF #ACA899;box-shadow:inset 1px 1px #716F64,inset -1px -1px #F1EFE2;"></div>
<span style="left:168.8px;top:374px;font-size:14px;line-height:14px;font-weight:bold;-webkit-text-stroke:0;color:#000;transform:scaleX(1.0081);transform-origin:0px 0;">3 506 000</span>
<span style="left:281.5px;top:374px;font-size:14px;line-height:14px;font-weight:bold;-webkit-text-stroke:0;color:#000;">3.2</span>
<span style="left:340.8px;top:374px;font-size:14px;line-height:14px;font-weight:bold;-webkit-text-stroke:0;color:#000;transform:scaleX(0.9000);transform-origin:0px 0;">56.95</span>
<span style="left:462.8px;top:374px;font-size:14px;line-height:14px;font-weight:bold;-webkit-text-stroke:0;color:#000;transform:scaleX(0.9000);transform-origin:0px 0;">80.94</span>
<span style="left:168.8px;top:398px;font-size:14px;line-height:14px;font-weight:bold;-webkit-text-stroke:0;color:#000;transform:scaleX(1.0081);transform-origin:0px 0;">3 836 000</span>
<span style="left:278.0px;top:398px;font-size:14px;line-height:14px;font-weight:bold;-webkit-text-stroke:0;color:#000;">2.39</span>
<span style="left:340.8px;top:398px;font-size:14px;line-height:14px;font-weight:bold;-webkit-text-stroke:0;color:#000;transform:scaleX(0.9000);transform-origin:0px 0;">20.94</span>
<span style="left:465.0px;top:398px;font-size:14px;line-height:14px;font-weight:bold;-webkit-text-stroke:0;color:#000;">180.</span>
<div style="left:713px;top:346px;width:65px;height:82px;border:1px solid #ACA899"></div>
<div style="left:714px;top:347px;width:65px;height:82px;border:1px solid #FFFFFF"></div>
<div style="left:720px;top:345px;width:50px;height:4px;background:#ECE9D8"></div>
<span style="left:722.0px;top:341px;font-size:12px;line-height:12px;color:#000;transform:scaleX(0.9000);transform-origin:0px 0;">DISPLAY</span>
<div style="left:722px;top:358px;width:13px;height:13px;background:#fff;border:1px solid;border-color:#ACA899 #FFFFFF #FFFFFF #ACA899;box-shadow:inset 1px 1px #716F64,inset -1px -1px #F1EFE2"></div>
<span style="left:741.0px;top:358px;font-size:12px;line-height:12px;color:#000;transform:scaleX(0.8421);transform-origin:0px 0;">Full</span>
<div style="left:722px;top:378px;width:13px;height:13px;background:#fff;border:1px solid;border-color:#ACA899 #FFFFFF #FFFFFF #ACA899;box-shadow:inset 1px 1px #716F64,inset -1px -1px #F1EFE2"></div>
<span style="left:741.0px;top:379px;font-size:12px;line-height:12px;color:#000;transform:scaleX(0.9464);transform-origin:0px 0;">Xc/Xl</span>
<div style="left:722px;top:400px;width:13px;height:13px;background:#fff;border:1px solid;border-color:#ACA899 #FFFFFF #FFFFFF #ACA899;box-shadow:inset 1px 1px #716F64,inset -1px -1px #F1EFE2"><svg width="11" height="11" style="position:absolute;left:0;top:0" shape-rendering="crispEdges"><path d="M2 4h1v3h-1zM3 5h1v3h-1zM4 6h1v3h-1zM5 5h1v3h-1zM6 4h1v3h-1zM7 3h1v3h-1zM8 2h1v3h-1z" fill="#000"/></svg></div>
<span style="left:741.0px;top:402px;font-size:12px;line-height:12px;color:#000;transform:scaleX(0.8625);transform-origin:0px 0;">50 ohm</span>
<div style="left:132px;top:434px;width:508px;height:37px;border:1px solid #ACA899"></div>
<div style="left:133px;top:435px;width:508px;height:37px;border:1px solid #FFFFFF"></div>
<div style="left:144px;top:444px;width:114px;height:18px;background:#fff;border:1px solid;border-color:#ACA899 #FFFFFF #FFFFFF #ACA899;box-shadow:inset 1px 1px #716F64,inset -1px -1px #F1EFE2;"></div>
<div style="left:267px;top:444px;width:57px;height:18px;background:#fff;border:1px solid;border-color:#ACA899 #FFFFFF #FFFFFF #ACA899;box-shadow:inset 1px 1px #716F64,inset -1px -1px #F1EFE2;"></div>
<div style="left:329px;top:444px;width:57px;height:18px;background:#fff;border:1px solid;border-color:#ACA899 #FFFFFF #FFFFFF #ACA899;box-shadow:inset 1px 1px #716F64,inset -1px -1px #F1EFE2;"></div>
<div style="left:389px;top:444px;width:58px;height:18px;background:#fff;border:1px solid;border-color:#ACA899 #FFFFFF #FFFFFF #ACA899;box-shadow:inset 1px 1px #716F64,inset -1px -1px #F1EFE2;"></div>
<div style="left:451px;top:444px;width:57px;height:18px;background:#fff;border:1px solid;border-color:#ACA899 #FFFFFF #FFFFFF #ACA899;box-shadow:inset 1px 1px #716F64,inset -1px -1px #F1EFE2;"></div>
<div style="left:512px;top:444px;width:59px;height:18px;background:#fff;border:1px solid;border-color:#ACA899 #FFFFFF #FFFFFF #ACA899;box-shadow:inset 1px 1px #716F64,inset -1px -1px #F1EFE2;"></div>
<div style="left:573px;top:444px;width:59px;height:18px;background:#fff;border:1px solid;border-color:#ACA899 #FFFFFF #FFFFFF #ACA899;box-shadow:inset 1px 1px #716F64,inset -1px -1px #F1EFE2;"></div>
<span style="left:170.0px;top:447px;font-size:14px;line-height:14px;font-weight:bold;-webkit-text-stroke:0;color:#000;transform:scaleX(1.0000);transform-origin:0px 0;">3 704 000</span>
<span style="left:282.0px;top:447px;font-size:14px;line-height:14px;font-weight:bold;-webkit-text-stroke:0;color:#000;">1.18</span>
<span style="left:341.8px;top:447px;font-size:14px;line-height:14px;font-weight:bold;-webkit-text-stroke:0;color:#000;transform:scaleX(0.9000);transform-origin:0px 0;">53.73</span>
<span style="left:463.5px;top:447px;font-size:14px;line-height:14px;font-weight:bold;-webkit-text-stroke:0;color:#000;transform:scaleX(0.9143);transform-origin:0px 0;">63.87</span>
<div style="left:16px;top:479px;width:157px;height:120px;border:1px solid #ACA899"></div>
<div style="left:17px;top:480px;width:157px;height:120px;border:1px solid #FFFFFF"></div>
<div style="left:22px;top:478px;width:150px;height:4px;background:#ECE9D8"></div>
<span style="left:24.0px;top:476px;font-size:12px;line-height:12px;color:#000;transform:scaleX(0.8841);transform-origin:0px 0;">FREQUENCY SWEEP LIMITS</span>
<div style="left:23px;top:491px;width:70px;height:18px;background:#fff;border:1px solid;border-color:#ACA899 #FFFFFF #FFFFFF #ACA899;box-shadow:inset 1px 1px #716F64,inset -1px -1px #F1EFE2;"></div>
<span style="left:54.5px;top:493px;font-size:14px;line-height:14px;font-weight:bold;-webkit-text-stroke:0;color:#000;">2</span>
<div style="left:95px;top:491px;width:73px;height:18px;background:#fff;border:1px solid;border-color:#ACA899 #FFFFFF #FFFFFF #ACA899;box-shadow:inset 1px 1px #716F64,inset -1px -1px #F1EFE2;"></div>
<span style="left:127.5px;top:493px;font-size:14px;line-height:14px;font-weight:bold;-webkit-text-stroke:0;color:#000;">5</span>
<span style="left:24.0px;top:517px;font-size:12px;line-height:12px;color:#000;transform:scaleX(0.8538);transform-origin:0px 0;">MHz  (Start)</span>
<span style="left:104.0px;top:517px;font-size:12px;line-height:12px;color:#000;transform:scaleX(0.8750);transform-origin:0px 0;">MHz  (Stop)</span>
<div style="left:31px;top:539px;width:64px;height:17px;background:#ECE9D8;border:1px solid;border-color:#F1EFE2 #716F64 #716F64 #F1EFE2;box-shadow:inset 1px 1px #FFFFFF,inset -1px -1px #ACA899;"></div>
<span style="left:42.0px;top:542px;font-size:12px;line-height:12px;color:#000;transform:scaleX(0.9022);transform-origin:0px 0;">|&lt; Full &gt;|</span>
<div style="left:119px;top:540px;width:40px;height:16px;background:#00C000;border:1px solid;border-color:#F1EFE2 #716F64 #716F64 #F1EFE2;box-shadow:inset 1px 1px #FFFFFF,inset -1px -1px #ACA899;"></div>
<span style="left:126.0px;top:542px;font-size:12px;line-height:12px;color:#003000;transform:scaleX(0.9107);transform-origin:0px 0;">Save</span>
<div style="left:31px;top:560px;width:64px;height:17px;background:#ECE9D8;border:1px solid;border-color:#F1EFE2 #716F64 #716F64 #F1EFE2;box-shadow:inset 1px 1px #FFFFFF,inset -1px -1px #ACA899;"></div>
<span style="left:44.0px;top:563px;font-size:12px;line-height:12px;color:#000;transform:scaleX(0.7451);transform-origin:0px 0;">&gt; Zoom &lt;</span>
<div style="left:119px;top:560px;width:40px;height:17px;background:#ECE9D8;border:1px solid;border-color:#F1EFE2 #716F64 #716F64 #F1EFE2;box-shadow:inset 1px 1px #FFFFFF,inset -1px -1px #ACA899;"></div>
<span style="left:125.0px;top:563px;font-size:12px;line-height:12px;color:#000;transform:scaleX(0.8788);transform-origin:0px 0;">Recall</span>
<div style="left:182px;top:479px;width:70px;height:120px;border:1px solid #ACA899"></div>
<div style="left:183px;top:480px;width:70px;height:120px;border:1px solid #FFFFFF"></div>
<div style="left:190px;top:478px;width:62.5px;height:4px;background:#ECE9D8"></div>
<span style="left:192.0px;top:474px;font-size:12px;line-height:12px;color:#000;transform:scaleX(0.8582);transform-origin:0px 0;">CONTROLS</span>
<div style="left:190px;top:491px;width:13px;height:13px;background:#fff;border:1px solid;border-color:#ACA899 #FFFFFF #FFFFFF #ACA899;box-shadow:inset 1px 1px #716F64,inset -1px -1px #F1EFE2"></div>
<span style="left:209.0px;top:492px;font-size:12px;line-height:12px;color:#000;transform:scaleX(0.8600);transform-origin:0px 0;">Hold</span>
<div style="left:190px;top:515px;width:13px;height:13px;background:#fff;border:1px solid;border-color:#ACA899 #FFFFFF #FFFFFF #ACA899;box-shadow:inset 1px 1px #716F64,inset -1px -1px #F1EFE2"></div>
<span style="left:209.0px;top:516px;font-size:12px;line-height:12px;color:#000;transform:scaleX(0.8529);transform-origin:0px 0;">Bands</span>
<svg style="left:190px;top:537px" width="13" height="13"><circle cx="6.5" cy="6.5" r="5.5" fill="#F4F3EE" stroke="#C0BDB0"/><circle cx="6.5" cy="6.5" r="2" fill="#ACA899"/></svg>
<span style="left:209.0px;top:538px;font-size:12px;line-height:12px;color:#ACA899;transform:scaleX(0.8438);transform-origin:0px 0;">HF</span>
<svg style="left:190px;top:561px" width="13" height="13"><circle cx="6.5" cy="6.5" r="5.5" fill="#F4F3EE" stroke="#C0BDB0"/></svg>
<span style="left:209.0px;top:562px;font-size:12px;line-height:12px;color:#ACA899;transform:scaleX(0.8333);transform-origin:0px 0;">VHF</span>
<div style="left:261px;top:477px;width:296px;height:17px;background:#fff;border:1px solid;border-color:#ACA899 #FFFFFF #FFFFFF #ACA899;box-shadow:inset 1px 1px #716F64,inset -1px -1px #F1EFE2;"></div>
<div style="left:261px;top:506px;width:43px;height:79px;border:1px solid #ACA899"></div>
<div style="left:262px;top:507px;width:43px;height:79px;border:1px solid #FFFFFF"></div>
<div style="left:266px;top:510px;width:33px;height:18px;background:#ECE9D8;border:1px solid;border-color:#ACA899 #FFFFFF #FFFFFF #ACA899;box-shadow:inset 1px 1px #716F64,inset -1px -1px #F1EFE2;"></div>
<span style="left:272.0px;top:514px;font-size:12px;line-height:12px;color:#000;transform:scaleX(1.0500);transform-origin:0px 0;">500</span>
<span style="left:268.0px;top:532px;font-size:12px;line-height:12px;color:#000;transform:scaleX(0.8788);transform-origin:0px 0;">Points</span>
<div style="left:266px;top:546px;width:33px;height:17px;background:#ECE9D8;border:1px solid;border-color:#ACA899 #FFFFFF #FFFFFF #ACA899;box-shadow:inset 1px 1px #716F64,inset -1px -1px #F1EFE2;"></div>
<span style="left:272.0px;top:549px;font-size:12px;line-height:12px;color:#000;transform:scaleX(1.0500);transform-origin:0px 0;">703</span>
<span style="left:280.0px;top:565px;font-size:12px;line-height:12px;color:#000;transform:scaleX(0.8800);transform-origin:0px 0;">?</span>
<div style="left:316px;top:506px;width:240px;height:79px;border:1px solid #ACA899"></div>
<div style="left:317px;top:507px;width:240px;height:79px;border:1px solid #FFFFFF"></div>
<div style="left:322px;top:505px;width:103px;height:4px;background:#ECE9D8"></div>
<span style="left:324.0px;top:502px;font-size:12px;line-height:12px;color:#000;transform:scaleX(0.8991);transform-origin:0px 0;">BANDWIDTH and Q</span>
<div style="left:337px;top:532px;width:84px;height:18px;background:#80F080;border:1px solid;border-color:#ACA899 #FFFFFF #FFFFFF #ACA899;box-shadow:inset 1px 1px #716F64,inset -1px -1px #F1EFE2;"></div>
<span style="left:356.5px;top:535px;font-size:14px;line-height:14px;font-weight:bold;-webkit-text-stroke:0;color:#000;transform:scaleX(0.9020);transform-origin:0px 0;">330 000</span>
<span style="left:356.0px;top:553px;font-size:12px;line-height:12px;color:#000;transform:scaleX(0.8839);transform-origin:0px 0;">Bandwidth</span>
<div style="left:451px;top:532px;width:84px;height:18px;background:#FFFF00;border:1px solid;border-color:#ACA899 #FFFFFF #FFFFFF #ACA899;box-shadow:inset 1px 1px #716F64,inset -1px -1px #F1EFE2;"></div>
<span style="left:486.0px;top:535px;font-size:14px;line-height:14px;font-weight:bold;-webkit-text-stroke:0;color:#000;">11</span>
<span style="left:491.0px;top:553px;font-size:12px;line-height:12px;color:#000;transform:scaleX(0.7778);transform-origin:0px 0;">Q</span>
<div style="left:566px;top:479px;width:212px;height:109px;border:1px solid #ACA899"></div>
<div style="left:567px;top:480px;width:212px;height:109px;border:1px solid #FFFFFF"></div>
<div style="left:574px;top:478px;width:165px;height:4px;background:#ECE9D8"></div>
<span style="left:576.0px;top:474px;font-size:12px;line-height:12px;color:#000;transform:scaleX(0.8791);transform-origin:0px 0;">TRACE ENABLE AND COLOURS</span>
<span style="left:599.0px;top:495px;font-size:12px;line-height:12px;color:#C02828;transform:scaleX(0.8929);transform-origin:0px 0;">SWR</span>
<div style="left:633px;top:494px;width:13px;height:13px;background:#F00000;border:1px solid;border-color:#F1EFE2 #716F64 #716F64 #F1EFE2;box-shadow:inset 1px 1px #FFFFFF,inset -1px -1px #ACA899"></div>
<div style="left:651px;top:493px;width:13px;height:13px;background:#fff;border:1px solid;border-color:#ACA899 #FFFFFF #FFFFFF #ACA899;box-shadow:inset 1px 1px #716F64,inset -1px -1px #F1EFE2"><svg width="11" height="11" style="position:absolute;left:0;top:0" shape-rendering="crispEdges"><path d="M2 4h1v3h-1zM3 5h1v3h-1zM4 6h1v3h-1zM5 5h1v3h-1zM6 4h1v3h-1zM7 3h1v3h-1zM8 2h1v3h-1z" fill="#000"/></svg></div>
<span style="left:679.0px;top:495px;font-size:12px;line-height:12px;color:#C89038;transform:scaleX(0.8909);transform-origin:0px 0;">PHASE [°]</span>
<div style="left:735px;top:494px;width:13px;height:13px;background:#D88000;border:1px solid;border-color:#F1EFE2 #716F64 #716F64 #F1EFE2;box-shadow:inset 1px 1px #FFFFFF,inset -1px -1px #ACA899"></div>
<div style="left:754px;top:493px;width:13px;height:13px;background:#fff;border:1px solid;border-color:#ACA899 #FFFFFF #FFFFFF #ACA899;box-shadow:inset 1px 1px #716F64,inset -1px -1px #F1EFE2"><svg width="11" height="11" style="position:absolute;left:0;top:0" shape-rendering="crispEdges"><path d="M2 4h1v3h-1zM3 5h1v3h-1zM4 6h1v3h-1zM5 5h1v3h-1zM6 4h1v3h-1zM7 3h1v3h-1zM8 2h1v3h-1z" fill="#000"/></svg></div>
<span style="left:578.0px;top:515px;font-size:12px;line-height:12px;color:#D040D0;transform:scaleX(0.9787);transform-origin:0px 0;">|Z| [ohm]</span>
<div style="left:633px;top:515px;width:13px;height:13px;background:#F040F0;border:1px solid;border-color:#F1EFE2 #716F64 #716F64 #F1EFE2;box-shadow:inset 1px 1px #FFFFFF,inset -1px -1px #ACA899"></div>
<div style="left:651px;top:514px;width:13px;height:13px;background:#fff;border:1px solid;border-color:#ACA899 #FFFFFF #FFFFFF #ACA899;box-shadow:inset 1px 1px #716F64,inset -1px -1px #F1EFE2"><svg width="11" height="11" style="position:absolute;left:0;top:0" shape-rendering="crispEdges"><path d="M2 4h1v3h-1zM3 5h1v3h-1zM4 6h1v3h-1zM5 5h1v3h-1zM6 4h1v3h-1zM7 3h1v3h-1zM8 2h1v3h-1z" fill="#000"/></svg></div>
<span style="left:686.0px;top:515px;font-size:12px;line-height:12px;color:#40D040;transform:scaleX(0.8646);transform-origin:0px 0;">Rs [ohm]</span>
<div style="left:735px;top:515px;width:13px;height:13px;background:#00F000;border:1px solid;border-color:#F1EFE2 #716F64 #716F64 #F1EFE2;box-shadow:inset 1px 1px #FFFFFF,inset -1px -1px #ACA899"></div>
<div style="left:754px;top:514px;width:13px;height:13px;background:#fff;border:1px solid;border-color:#ACA899 #FFFFFF #FFFFFF #ACA899;box-shadow:inset 1px 1px #716F64,inset -1px -1px #F1EFE2"></div>
<span style="left:583.0px;top:538px;font-size:12px;line-height:12px;color:#161688;transform:scaleX(0.8723);transform-origin:0px 0;">R.L. [dB]</span>
<div style="left:633px;top:537px;width:13px;height:13px;background:#0000F0;border:1px solid;border-color:#F1EFE2 #716F64 #716F64 #F1EFE2;box-shadow:inset 1px 1px #FFFFFF,inset -1px -1px #ACA899"></div>
<div style="left:651px;top:536px;width:13px;height:13px;background:#fff;border:1px solid;border-color:#ACA899 #FFFFFF #FFFFFF #ACA899;box-shadow:inset 1px 1px #716F64,inset -1px -1px #F1EFE2"></div>
<span style="left:677.0px;top:538px;font-size:12px;line-height:12px;color:#207820;transform:scaleX(0.9444);transform-origin:0px 0;">|Xs| [ohm]</span>
<div style="left:735px;top:537px;width:13px;height:13px;background:#007000;border:1px solid;border-color:#F1EFE2 #716F64 #716F64 #F1EFE2;box-shadow:inset 1px 1px #FFFFFF,inset -1px -1px #ACA899"></div>
<div style="left:754px;top:536px;width:13px;height:13px;background:#fff;border:1px solid;border-color:#ACA899 #FFFFFF #FFFFFF #ACA899;box-shadow:inset 1px 1px #716F64,inset -1px -1px #F1EFE2"></div>
<div style="left:582px;top:556px;width:40px;height:20px;background:#ECE9D8;border:1px solid;border-color:#F1EFE2 #716F64 #716F64 #F1EFE2;box-shadow:inset 1px 1px #FFFFFF,inset -1px -1px #ACA899;"></div>
<span style="left:596.0px;top:560px;font-size:12px;line-height:12px;color:#000;transform:scaleX(0.8462);transform-origin:0px 0;">All</span>
<div style="left:638px;top:556px;width:40px;height:20px;background:#D8D5C8"></div>
<span style="left:649.0px;top:560px;font-size:12px;line-height:12px;font-weight:bold;-webkit-text-stroke:0;color:#000;transform:scaleX(0.9600);transform-origin:0px 0;">RSS</span>
<div style="left:678px;top:560px;width:13px;height:13px;background:#fff;border:1px solid;border-color:#ACA899 #FFFFFF #FFFFFF #ACA899;box-shadow:inset 1px 1px #716F64,inset -1px -1px #F1EFE2"></div>
<div style="left:726px;top:556px;width:40px;height:20px;background:#ECE9D8;border:1px solid;border-color:#F1EFE2 #716F64 #716F64 #F1EFE2;box-shadow:inset 1px 1px #FFFFFF,inset -1px -1px #ACA899;"></div>
<span style="left:733.0px;top:560px;font-size:12px;line-height:12px;color:#000;transform:scaleX(0.8966);transform-origin:0px 0;">None</span>
<div style="left:0px;top:568px;width:792px;height:28px;background:linear-gradient(#1E4CC4 0,#1E4CC4 1px,#3C86F0 1px,#3A80EC 3px,#2A64DE 4px,#2459D8 6px,#2459D8 25px,#1E4EC8 28px)"></div>
<div style="left:0px;top:571px;width:152px;height:25px;background:#1E4FB0;border-radius:2px;box-shadow:inset 1px 1px #163C90"></div>
<svg style="left:3px;top:576px" width="16" height="16"><rect x="0" y="0" width="16" height="16" fill="#C8F4FF"/><rect x="1" y="1" width="14" height="14" fill="#007A00"/><rect x="0" y="1" width="1" height="14" fill="#007A00"/><rect x="1" y="0" width="14" height="1" fill="#007A00"/><path d="M1 2.5h14M1 5.5h14M3.5 1v14M10.5 1v14" stroke="#000" stroke-width="1"/><polyline points="0.5,8.5 3,5.5 5.5,5.5 6.5,7.5 8.5,11 10.5,11.5 13,9 14,6" fill="none" stroke="#E0F040" stroke-width="1.3"/></svg>
<span style="left:22.0px;top:578px;font-size:12px;line-height:12px;color:#fff;transform:scaleX(0.8397);transform-origin:0px 0;">SVNA by SP3SWJ -  S...</span>
<div style="left:153px;top:571px;width:157px;height:25px;background:linear-gradient(#4C8EF8,#3C7EF0 40%,#3472E8);border-radius:3px"></div>
<svg style="left:162px;top:575px" width="16" height="16"><rect width="16" height="16" fill="#F8F0F0"/><path d="M8 2L9.5 6L14 5L10.5 8.5L14 12L9.5 11L8 15L6.5 11L2 12L5.5 8.5L2 5L6.5 6Z" fill="#E00000"/></svg>
<span style="left:182.0px;top:578px;font-size:12px;line-height:12px;color:#fff;transform:scaleX(0.9000);transform-origin:0px 0;">IrfanView</span>
<div style="left:761px;top:568px;width:31px;height:28px;background:linear-gradient(#1CA8F0,#0E9CE8 50%,#0A8AD8);border-left:1px solid #1070D0"></div>
<svg style="left:752px;top:575px" width="18" height="18"><circle cx="9" cy="9" r="8" fill="#5AA0F8" stroke="#E8F0FF" stroke-width="1.2"/><path d="M11 5L7 9L11 13" stroke="#fff" stroke-width="2" fill="none"/></svg>
<svg style="left:772px;top:576px" width="18" height="16"><rect x="0" y="0" width="16" height="16" fill="#E06010"/><path d="M8 2L15 14H1Z" fill="#F8C020" stroke="#703000"/><path d="M8 6v4M8 11.5v1.5" stroke="#000" stroke-width="1.5"/></svg>
<svg style="left:466px;top:345px" width="16" height="24"><path d="M1.5 1.5V17.5L5.3 13.8L8.6 21L11.2 19.8L8.2 12.8H13.2Z" fill="#fff" stroke="#000" stroke-width="1.1" stroke-linejoin="miter"/></svg>
</body></html>
